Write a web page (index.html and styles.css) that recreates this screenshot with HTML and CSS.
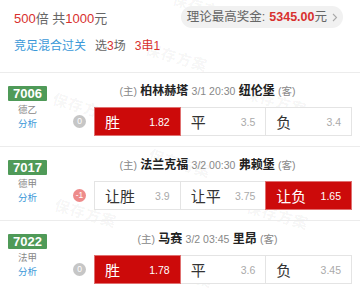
FILE: index.html
```html
<!DOCTYPE html>
<html lang="zh-CN">
<head>
<meta charset="utf-8">
<title>竞足混合过关</title>
<link rel="stylesheet" href="styles.css">
</head>
<body>
<div class="page">
  <div class="watermarks" aria-hidden="true">
    <span class="wm wm1">保存方案</span>
    <span class="wm wm2">保存方案</span>
    <span class="wm wm3">保存方案</span>
    <span class="wm wm4">保存方案</span>
    <span class="wm wm5">保存方案</span>
    <span class="wm wm6">保存方案</span>
    <span class="wm wm7">保存方案</span>
    <span class="wm wm8">保存方案</span>
  </div>

  <div class="summary">
    <div class="summary-line">
      <div class="bet"><span class="red">500</span>倍 共<span class="red">1000</span>元</div>
      <div class="pill">理论最高奖金: <b class="red">5345.00</b>元
        <svg class="chev" width="6" height="9" viewBox="0 0 6 9"><polyline points="1,1 4.5,4.5 1,8" fill="none" stroke="#aaa" stroke-width="1.1"/></svg>
      </div>
    </div>
    <div class="play"><span class="blue">竞足混合过关</span><span class="gap">选<span class="red">3</span>场</span><span class="red gap">3串1</span></div>
  </div>

  <div class="match">
    <div class="meta">
      <div class="badge">7006</div>
      <div class="league">德乙</div>
      <div class="analysis">分析</div>
    </div>
    <div class="main">
      <div class="teams"><span class="tag">(主)</span> <b>柏林赫塔</b> <span class="time">3/1 20:30</span> <b>纽伦堡</b> <span class="tag">(客)</span></div>
      <div class="odds-line">
        <span class="hcp grey">0</span>
        <div class="odds">
          <div class="cell on"><span class="lbl">胜</span><span class="num">1.82</span></div>
          <div class="cell"><span class="lbl">平</span><span class="num">3.5</span></div>
          <div class="cell"><span class="lbl">负</span><span class="num">3.4</span></div>
        </div>
      </div>
    </div>
  </div>

  <div class="match">
    <div class="meta">
      <div class="badge">7017</div>
      <div class="league">德甲</div>
      <div class="analysis">分析</div>
    </div>
    <div class="main">
      <div class="teams"><span class="tag">(主)</span> <b>法兰克福</b> <span class="time">3/2 00:30</span> <b>弗赖堡</b> <span class="tag">(客)</span></div>
      <div class="odds-line">
        <span class="hcp pink">-1</span>
        <div class="odds">
          <div class="cell"><span class="lbl">让胜</span><span class="num">3.9</span></div>
          <div class="cell"><span class="lbl">让平</span><span class="num">3.75</span></div>
          <div class="cell on"><span class="lbl">让负</span><span class="num">1.65</span></div>
        </div>
      </div>
    </div>
  </div>

  <div class="match">
    <div class="meta">
      <div class="badge">7022</div>
      <div class="league">法甲</div>
      <div class="analysis">分析</div>
    </div>
    <div class="main">
      <div class="teams"><span class="tag">(主)</span> <b>马赛</b> <span class="time">3/2 03:45</span> <b>里昂</b> <span class="tag">(客)</span></div>
      <div class="odds-line">
        <span class="hcp grey">0</span>
        <div class="odds">
          <div class="cell on"><span class="lbl">胜</span><span class="num">1.78</span></div>
          <div class="cell"><span class="lbl">平</span><span class="num">3.6</span></div>
          <div class="cell"><span class="lbl">负</span><span class="num">3.45</span></div>
        </div>
      </div>
    </div>
  </div>
</div>
</body>
</html>
```

FILE: styles.css
```css
html, body {
  margin: 0;
  padding: 0;
  background: #fff;
}
body {
  font-family: "Liberation Sans", Arial, "Noto Sans CJK SC", sans-serif;
  color: #333;
  width: 360px;
  overflow: hidden;
}
.page {
  position: relative;
}
.watermarks {
  position: absolute;
  inset: 0;
  z-index: 0;
  pointer-events: none;
}
.wm {
  position: absolute;
  font-size: 15px;
  font-weight: bold;
  color: rgba(0, 0, 0, 0.05);
  transform: rotate(16deg);
  white-space: nowrap;
  letter-spacing: 1px;
}
.wm1 { left: 172px; top: -4px; }
.wm2 { left: 145px; top: 46px; }
.wm3 { left: 52px; top: 96px; }
.wm4 { left: 244px; top: 90px; }
.wm5 { left: 148px; top: 152px; }
.wm6 { left: 54px; top: 202px; }
.wm7 { left: 246px; top: 204px; }
.wm8 { left: 150px; top: 262px; }

.summary, .match {
  position: relative;
  z-index: 1;
}
.summary {
  padding: 6px 17px 16px 14px;
  border-bottom: 1px solid #ececec;
  height: 50px;
}
.summary-line {
  display: flex;
  justify-content: space-between;
  align-items: center;
  height: 22px;
}
.bet {
  font-size: 13px;
  color: #666;
}
.red { color: #d8302e; }
.blue { color: #3a98d8; }
.pill {
  height: 22px;
  line-height: 22px;
  padding: 0 5px 0 6px;
  border-radius: 11px;
  background: #f1f1f1;
  font-size: 12.5px;
  color: #666;
  display: flex;
  align-items: center;
  white-space: nowrap;
}
.pill b {
  font-weight: bold;
  margin-left: 4px;
}
.chev {
  margin-left: 5px;
}
.play {
  margin-top: 8px;
  line-height: 20px;
  font-size: 12px;
  color: #666;
}
.gap {
  margin-left: 9px;
}

.match {
  display: flex;
  height: 73px;
  border-bottom: 1px solid #ececec;
}
.meta {
  width: 55px;
  flex: none;
  padding-top: 13px;
  display: flex;
  flex-direction: column;
  align-items: center;
}
.badge {
  width: 39px;
  height: 15px;
  line-height: 15px;
  text-align: center;
  background: #4f9a58;
  color: #fff;
  font-weight: bold;
  font-size: 13px;
  border-radius: 1px;
}
.league {
  margin-top: 2px;
  line-height: 14px;
  font-size: 9.5px;
  color: #888;
}
.analysis {
  line-height: 14px;
  font-size: 9.5px;
  color: #3a98d8;
}
.main {
  flex: 1;
  padding-top: 8px;
}
.teams {
  text-align: center;
  line-height: 20px;
  font-size: 12px;
  color: #333;
  white-space: nowrap;
}
.teams b {
  font-weight: bold;
  color: #222;
}
.tag {
  font-size: 10.5px;
  color: #888;
}
.time {
  font-size: 10.5px;
  color: #888;
}
.odds-line {
  margin-top: 6px;
  display: flex;
  align-items: center;
  padding-left: 18px;
  padding-right: 8px;
}
.hcp {
  width: 13px;
  height: 13px;
  border-radius: 50%;
  color: #fff;
  font-size: 8.5px;
  line-height: 13px;
  text-align: center;
  flex: none;
  margin-right: 8px;
}
.hcp.grey { background: #c6c6c6; }
.hcp.pink { background: #ee8b8b; }
.odds {
  flex: 1;
  display: flex;
  height: 29px;
}
.cell {
  flex: 1;
  display: flex;
  justify-content: space-between;
  align-items: center;
  padding: 0 10px;
  border: 1px solid #e4e4e4;
  background: #fff;
  box-sizing: border-box;
  margin-left: -1px;
  position: relative;
}
.cell:first-child { margin-left: 0; }
.cell.on {
  background: #cc0a0a;
  border-color: #e07070;
  z-index: 1;
}
.lbl {
  font-size: 15px;
  color: #333;
}
.num {
  font-size: 10.5px;
  color: #aaa;
}
.cell.on .lbl, .cell.on .num {
  color: #fff;
}
```
